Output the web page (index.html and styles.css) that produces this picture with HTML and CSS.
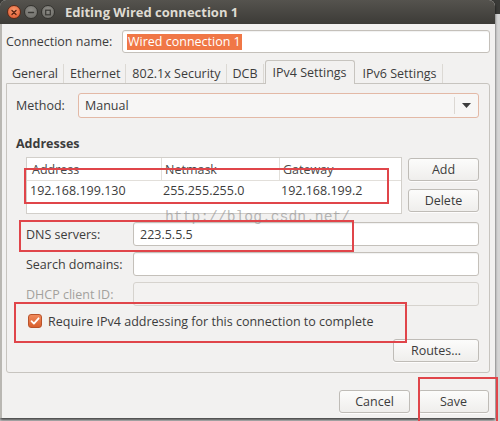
FILE: index.html
```html
<!DOCTYPE html>
<html lang="en">

<head>
    <meta charset="UTF-8" />
    <meta name="viewport" content="width=device-width, initial-scale=1.0" />
    <title>Editing Wired connection 1</title>
    <link rel="stylesheet" href="styles.css">
</head>

<body>
    <div class="screen">
        <div class="window">
            <div class="titlebar">
                <div class="controls">
                    <span class="ctl close">
                        <svg width="13" height="13" viewBox="0 0 13 13"><path d="M4.3 4.3l4.4 4.4M8.7 4.3l-4.4 4.4" stroke="#5a2413" stroke-width="1.4" stroke-linecap="round" /></svg>
                    </span>
                    <span class="ctl">
                        <svg width="13" height="13" viewBox="0 0 13 13"><path d="M3.8 6.5h5.4" stroke="#3a3935" stroke-width="1.5" stroke-linecap="round" /></svg>
                    </span>
                    <span class="ctl">
                        <svg width="13" height="13" viewBox="0 0 13 13"><rect x="4" y="4" width="5" height="5" fill="none" stroke="#3a3935" stroke-width="1.3" /></svg>
                    </span>
                </div>
                <div class="title">Editing Wired connection 1</div>
            </div>

            <div class="content">
                <div class="name-row">
                    <label class="name-label">Connection name:</label>
                    <div class="entry">
                        <span class="selected">Wired connection 1</span>
                    </div>
                </div>

                <div class="tabs">
                    <span class="tab">General</span>
                    <span class="tab">Ethernet</span>
                    <span class="tab">802.1x Security</span>
                    <span class="tab">DCB</span>
                    <span class="tab active">IPv4 Settings</span>
                    <span class="tab">IPv6 Settings</span>
                </div>

                <div class="panel">
                    <div class="method-row">
                        <label class="method-label">Method:</label>
                        <div class="combo">
                            <span class="combo-value">Manual</span>
                            <span class="combo-arrow">
                                <svg width="9" height="5" viewBox="0 0 9 5"><path d="M0 0h9L4.5 5z" fill="#3c3c3c" /></svg>
                            </span>
                        </div>
                    </div>

                    <h3 class="section">Addresses</h3>

                    <div class="addresses">
                        <div class="addr-table">
                            <div class="addr-head">
                                <span class="col c1">Address</span>
                                <span class="col c2">Netmask</span>
                                <span class="col c3">Gateway</span>
                            </div>
                            <div class="addr-row">
                                <span class="col c1">192.168.199.130</span>
                                <span class="col c2">255.255.255.0</span>
                                <span class="col c3">192.168.199.2</span>
                            </div>
                        </div>
                        <div class="side-buttons">
                            <button class="btn">Add</button>
                            <button class="btn">Delete</button>
                        </div>
                    </div>

                    <div class="fields">
                        <div class="field">
                            <label>DNS servers:</label>
                            <div class="entry">223.5.5.5</div>
                        </div>
                        <div class="field">
                            <label>Search domains:</label>
                            <div class="entry"></div>
                        </div>
                        <div class="field disabled">
                            <label>DHCP client ID:</label>
                            <div class="entry"></div>
                        </div>
                    </div>

                    <div class="check-row">
                        <span class="checkbox">
                            <svg width="10" height="10" viewBox="0 0 10 10"><path d="M1.5 5.2l2.4 2.4L8.6 2.3" fill="none" stroke="#fff" stroke-width="1.8" stroke-linecap="round" stroke-linejoin="round" /></svg>
                        </span>
                        <span>Require IPv4 addressing for this connection to complete</span>
                    </div>

                    <div class="routes-row">
                        <button class="btn routes">Routes…</button>
                    </div>
                </div>

                <div class="actions">
                    <button class="btn">Cancel</button>
                    <button class="btn">Save</button>
                </div>
            </div>
        </div>

        <!-- annotation marks drawn on top of the dialog -->
        <div class="watermark">http://blog.csdn.net/</div>
        <div class="mark mark-row"></div>
        <div class="mark mark-dns"></div>
        <div class="mark mark-check"></div>
        <div class="mark mark-save"></div>
    </div>
</body>

</html>
```

FILE: styles.css
```css
* {
    box-sizing: border-box;
    margin: 0;
    padding: 0;
}

body {
    font-family: 'Open Sans', 'Noto Sans', sans-serif;
    font-size: 12.5px;
    color: #3c3c3c;
    background: #cfcfcf;
}

.screen {
    position: relative;
    width: 500px;
    height: 421px;
    overflow: hidden;
    background: linear-gradient(#3a3a37 0, #3a3a37 14px, #d5d5d5 14px);
}

.window {
    width: 495px;
    height: 418px;
    background: #f2f1f0;
    border-radius: 6px 6px 0 0;
    box-shadow: 0 2px 3px rgba(0, 0, 0, 0.7);
    border-left: 2px solid #b9b7b2;
    display: flex;
    flex-direction: column;
}

.titlebar {
    height: 24px;
    display: flex;
    align-items: center;
    background: linear-gradient(#55534e, #3c3b37);
    border-radius: 6px 6px 0 0;
    margin-left: -2px;
    padding-left: 7px;
}

.controls {
    display: flex;
    gap: 3px;
}

.ctl {
    width: 14px;
    height: 14px;
    border-radius: 50%;
    display: flex;
    align-items: center;
    justify-content: center;
    background: radial-gradient(circle at 50% 35%, #8e8d88, #6a6964);
    border: 1px solid #34332f;
}

.ctl.close {
    background: radial-gradient(circle at 50% 35%, #f89a6e, #e0532a);
    border-color: #5b2a18;
}

.title {
    margin-left: 10px;
    color: #dfdbd2;
    font-weight: bold;
    font-size: 13px;
}

.content {
    flex: 1;
    padding: 6px 5px 0 4px;
    display: flex;
    flex-direction: column;
}

.name-row {
    display: flex;
    align-items: center;
    height: 23px;
}

.name-label {
    width: 116px;
}

.entry {
    flex: 1;
    height: 24px;
    display: flex;
    align-items: center;
    padding-left: 6px;
    background: #fff;
    border: 1px solid #c4c0ba;
    border-radius: 3px;
    box-shadow: inset 0 1px 1px rgba(0, 0, 0, 0.06);
}

.name-row .entry {
    height: 23px;
    padding-left: 4px;
}

.selected {
    background: #f07746;
    color: #fff;
    padding: 0 1px;
    line-height: 16px;
}

.tabs {
    display: flex;
    height: 24px;
    margin-top: 7px;
    margin-bottom: -1px;
    position: relative;
    z-index: 1;
}

.tab {
    display: flex;
    align-items: center;
    padding: 0 5px 0 6px;
    border-right: 1px solid #dcd9d4;
    margin: 4px 0 1px;
}

.tab.active {
    margin: 0 0 0 1px;
    padding: 0 7px;
    background: #f2f1f0;
    border: 1px solid #c7c4bf;
    border-bottom: none;
    border-radius: 3px 3px 0 0;
}

.tab.active + .tab {
    padding-left: 8px;
}

.panel {
    border: 1px solid #c7c4bf;
    border-radius: 0 3px 3px 3px;
    padding: 9px 10px 9px 9px;
    height: 290px;
}

.method-row {
    display: flex;
    align-items: center;
    height: 25px;
}

.method-label {
    width: 62px;
}

.combo {
    flex: 1;
    height: 25px;
    display: flex;
    align-items: center;
    background: #f7f6f5;
    border: 1px solid #e3b9a6;
    border-radius: 3px;
}

.combo-value {
    flex: 1;
    padding-left: 6px;
}

.combo-arrow {
    width: 24px;
    height: 17px;
    display: flex;
    align-items: center;
    justify-content: center;
    border-left: 1px solid #dcd8d3;
}

.section {
    font-size: 12.5px;
    font-weight: bold;
    margin-top: 17px;
    height: 18px;
    line-height: 18px;
}

.addresses {
    display: flex;
    gap: 6px;
    margin-top: 4px;
    padding-left: 10px;
}

.addr-table {
    flex: 1;
    height: 57px;
    background: #fff;
    border: 1px solid #d2cfca;
}

.addr-head,
.addr-row {
    display: flex;
}

.addr-head {
    height: 23px;
    border-bottom: 1px solid #e2dfda;
    color: #4a4a4a;
}

.addr-row {
    height: 19px;
}

.col {
    display: flex;
    align-items: center;
    padding-left: 1px;
}

.addr-row .c1 {
    padding-left: 3px;
}

.addr-head .col {
    padding-left: 3px;
    border-right: 1px solid #e2dfda;
}

.addr-head .c1 {
    padding-left: 5px;
}

.c1 {
    width: 135px;
}

.c2 {
    width: 118px;
}

.c3 {
    flex: 1;
}

.addr-head .c3 {
    border-right: none;
}

.side-buttons {
    display: flex;
    flex-direction: column;
    gap: 8px;
    padding-top: 1px;
}

.btn {
    font: inherit;
    color: #3c3c3c;
    height: 23px;
    width: 71px;
    background: linear-gradient(#fcfcfb, #efeeec);
    border: 1px solid #bfbcb7;
    border-radius: 3px;
    box-shadow: 0 1px 0 rgba(255, 255, 255, 0.8);
}

.fields {
    display: flex;
    flex-direction: column;
    gap: 6px;
    margin-top: 8px;
    padding-left: 10px;
}

.field {
    display: flex;
    align-items: center;
}

.field label {
    width: 107px;
}

.field.disabled label {
    color: #a3a19d;
}

.field.disabled .entry {
    background: #f3f2f1;
    border-color: #d6d3ce;
    box-shadow: none;
}

.check-row {
    display: flex;
    align-items: center;
    gap: 6px;
    height: 18px;
    margin-top: 6px;
    padding-left: 12px;
}

.checkbox {
    width: 14px;
    height: 14px;
    display: flex;
    align-items: center;
    justify-content: center;
    border-radius: 3px;
    background: linear-gradient(#f08a5c, #d9602e);
    border: 1px solid #b9532a;
}

.routes-row {
    display: flex;
    justify-content: flex-end;
    margin-top: 9px;
}

.btn.routes {
    width: 86px;
}

.actions {
    display: flex;
    justify-content: flex-end;
    gap: 8px;
    margin-top: 17px;
    padding-right: 1px;
}

.watermark {
    position: absolute;
    left: 165px;
    top: 209px;
    font-family: 'Liberation Mono', monospace;
    font-size: 14.7px;
    color: rgba(140, 140, 140, 0.6);
}

.mark {
    position: absolute;
    border: 2px solid #e0454a;
}

.mark-row {
    left: 24px;
    top: 168px;
    width: 365px;
    height: 36px;
}

.mark-dns {
    left: 19px;
    top: 220px;
    width: 335px;
    height: 32px;
}

.mark-check {
    left: 14px;
    top: 302px;
    width: 393px;
    height: 41px;
}

.mark-save {
    left: 418px;
    top: 377px;
    width: 80px;
    height: 50px;
}
```
